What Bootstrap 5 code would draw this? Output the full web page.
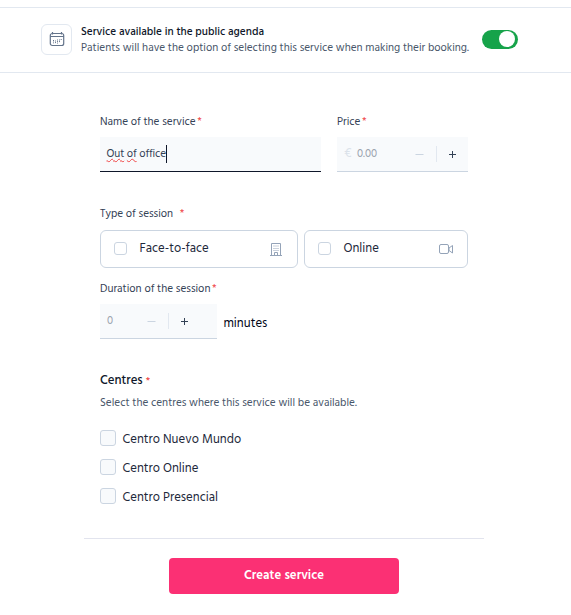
<!DOCTYPE html>
<html lang="en">
<head>
<meta charset="utf-8">
<meta name="viewport" content="width=device-width, initial-scale=1">
<title>Create service</title>
<link href="https://cdn.jsdelivr.net/npm/bootstrap@5.3.0/dist/css/bootstrap.min.css" rel="stylesheet">
<style>
  body { font-family: "Hind", "Noto Sans", sans-serif; font-size: 11.2px; line-height: 16px; color: #334155; background: #fff; overflow: hidden; }
  .agenda-bar { margin-top: 7px; height: 66px; padding: 0 0 2px 41px; border-top: 1px solid #e2e8f0; border-bottom: 1px solid #e2e8f0; }
  .agenda-icon { width: 31px; height: 31px; border: 1px solid #e2e8f0; border-radius: 6px; margin-right: 9px; }
  .agenda-text { width: 401px; white-space: nowrap; padding-top: 2px; }
  .agenda-title { color: #0f172a; font-weight: 500; height: 16px; }
  .agenda-hint { color: #475569; }
  .agenda-bar .form-switch { min-height: 0; padding: 0; margin: 0; }
  .agenda-bar .form-check-input { width: 36px; height: 19px; margin: 0; float: none; display: block; border: 0; background-color: #16a34a; background-image: none; border-radius: 10px; position: relative; }
  .agenda-bar .form-check-input::after { content: ""; position: absolute; width: 16px; height: 16px; right: 3px; top: 1.5px; border-radius: 50%; background: #fff; }
  .service-form { width: 368px; margin: 40px 0 0 100px; }
  .field-label { height: 17px; padding-top: 1px; white-space: nowrap; }
  .req { color: #ef4444; margin-left: 1.5px; }
  .req-wide { margin-left: 6.5px; }
  .field-box { height: 35px; background: #f8fafc; border-bottom: 1px solid #cbd5e1; padding: 0 0 0 7px; }
  .field-box.active { border-color: #0f172a; padding-left: 6.500px; }
  .field-gap { margin-top: 7px; }
  .w-name { width: 221px; } .w-price { width: 131px; } .w-mins { width: 117px; }
  .w-price .field-box { padding-right: 11px; }
  .w-mins { padding-right: 28px !important; }
  .typed { padding-bottom: 1px; letter-spacing: -.1px; }
  .misspelt { text-decoration: underline wavy #ef4444 1px; text-decoration-skip-ink: none; text-underline-offset: 1px; }
  .caret { width: 1px; height: 18px; background: #0f172a; }
  .ghost { color: #9ca3af; }
  .currency { color: #dbe2ea; font-size: 12.8px; width: 13px; }
  .stepper-rule { width: 1px; height: 16px; background: #e2e8f0; margin: 0 11px 0 12px; }
  .type-label { margin-top: 33px; }
  .session-option { height: 38px; border: 1px solid #cbd5e1; border-radius: 6px; padding: 0 13px; color: #1e293b; font-size: 12.8px; }
  .session-option .form-check-input { width: 13px; height: 13px; margin: 0 12.5px 1px 0; border: 1px solid #cbd5e1; border-radius: 3px; }
  .w-face { width: 198px; } .w-online { width: 164px; }
  .unit { color: #020617; font-size: 12.8px; padding: 4px 0 0 6.4px; }
  .centres-title { color: #0f172a; font-size: 12.8px; font-weight: 500; line-height: 16px; margin: 34px 0 6px; }
  .centres-title .req { font-size: 10px; margin-left: 3px; }
  .centre-list { gap: 13px; margin-top: 19px; }
  .centre-row { height: 16px; color: #1e293b; font-size: 12.8px; }
  .centre-row span { padding-top: 4px; }
  .centre-row .form-check-input { width: 16px; height: 16px; margin: 0 6.500px 0 0; border: 1px solid #cbd5e1; border-radius: 3px; background-color: #f8fafc; }
  .form-foot { width: 400px; margin: 34px 0 0 84px; border-top: 1px solid #e2e4ee; padding-top: 19px; }
  .btn-create { width: 230px; height: 36px; padding: 0; border: 0; border-radius: 4px; background: #fb3074; color: #fff; font-size: 12.8px; font-weight: 600; }
</style>
<script src="https://cdn.jsdelivr.net/npm/bootstrap@5.3.0/dist/js/bootstrap.bundle.min.js" defer></script>
</head>
<body>
<header class="agenda-bar d-flex align-items-center">
  <div class="agenda-icon d-flex align-items-center justify-content-center flex-shrink-0">
    <svg width="16" height="16" viewBox="0 0 16 16" fill="none" stroke="#64748b" stroke-width="1.2"><rect x="1.300" y="2.5" width="13.400" height="12" rx="2"/><path d="M1 5.5h14M3.500 1v2.500M12.500 1v2.500"/><path d="M4.500 9v3.500M6.500 9.500v3M8.500 8.500v4M10.500 8.500v3M12.200 8v1.500" stroke-dasharray="1 .6" stroke-width="1"/></svg>
  </div>
  <div class="agenda-text">
    <div class="agenda-title">Service available in the public agenda</div>
    <div class="agenda-hint">Patients will have the option of selecting this service when making their booking.</div>
  </div>
  <div class="form-check form-switch"><input class="form-check-input" type="checkbox" role="switch" checked aria-label="Service available"></div>
</header>

<main>
  <form class="service-form">
    <div class="d-flex justify-content-between">
      <div class="w-name">
        <div class="field-label">Name of the service<span class="req">*</span></div>
        <div class="field-box active field-gap d-flex align-items-center"><span class="typed"><span class="misspelt">Out</span> <span class="misspelt">of</span> office</span><span class="caret"></span></div>
      </div>
      <div class="w-price">
        <div class="field-label">Price<span class="req">*</span></div>
        <div class="field-box field-gap d-flex align-items-center">
          <span class="currency">€</span><span class="ghost flex-grow-1">0.00</span>
          <svg width="9" height="9" viewBox="0 0 9 9" stroke="#cbd5e1"><path d="M.5 4.500h8"/></svg>
          <span class="stepper-rule"></span>
          <svg width="9" height="9" viewBox="0 0 9 9" stroke="#334155"><path d="M1 4.500h7M4.500 1v7"/></svg>
        </div>
      </div>
    </div>

    <div class="field-label type-label">Type of session<span class="req req-wide">*</span></div>
    <div class="d-flex justify-content-between mt-2">
      <label class="session-option w-face d-flex align-items-center">
        <input class="form-check-input" type="checkbox"><span class="flex-grow-1">Face-to-face</span>
        <svg width="16" height="16" viewBox="0 0 16 16" fill="none" stroke="#94a3b8"><path d="M3.500 14V2.500h9V14M2 14.500h12M6.500 14v-2.500h3V14"/><path d="M5.500 5h1M7.500 5h1M9.500 5h1M5.500 7.500h1M7.500 7.500h1M9.500 7.500h1M5.500 9.500h1M7.500 9.500h1M9.500 9.500h1"/></svg>
      </label>
      <label class="session-option w-online d-flex align-items-center">
        <input class="form-check-input" type="checkbox"><span class="flex-grow-1">Online</span>
        <svg width="16" height="16" viewBox="0 0 16 16" fill="none" stroke="#94a3b8" stroke-linejoin="round"><rect x="1.500" y="3.500" width="9" height="9" rx="1.500"/><path d="M11 7l3.500-2.500v7.500l-3.500-2.500z"/></svg>
      </label>
    </div>

    <div class="field-label" style="margin-top:12px">Duration of the session<span class="req">*</span></div>
    <div class="d-flex align-items-center field-gap">
      <div class="field-box w-mins d-flex align-items-center">
        <span class="ghost flex-grow-1">0</span>
        <svg width="9" height="9" viewBox="0 0 9 9" stroke="#cbd5e1"><path d="M.5 4.500h8"/></svg>
        <span class="stepper-rule"></span>
        <svg width="9" height="9" viewBox="0 0 9 9" stroke="#334155"><path d="M1 4.500h7M4.500 1v7"/></svg>
      </div>
      <span class="unit">minutes</span>
    </div>

    <h2 class="centres-title">Centres<span class="req">*</span></h2>
    <div class="agenda-hint">Select the centres where this service will be available.</div>
    <div class="centre-list d-grid">
      <label class="centre-row d-flex align-items-center"><input class="form-check-input" type="checkbox"><span>Centro Nuevo Mundo</span></label>
      <label class="centre-row d-flex align-items-center"><input class="form-check-input" type="checkbox"><span>Centro Online</span></label>
      <label class="centre-row d-flex align-items-center"><input class="form-check-input" type="checkbox"><span>Centro Presencial</span></label>
    </div>
  </form>
  <div class="form-foot text-center"><button type="button" class="btn btn-create">Create service</button></div>
</main>
</body>
</html>
